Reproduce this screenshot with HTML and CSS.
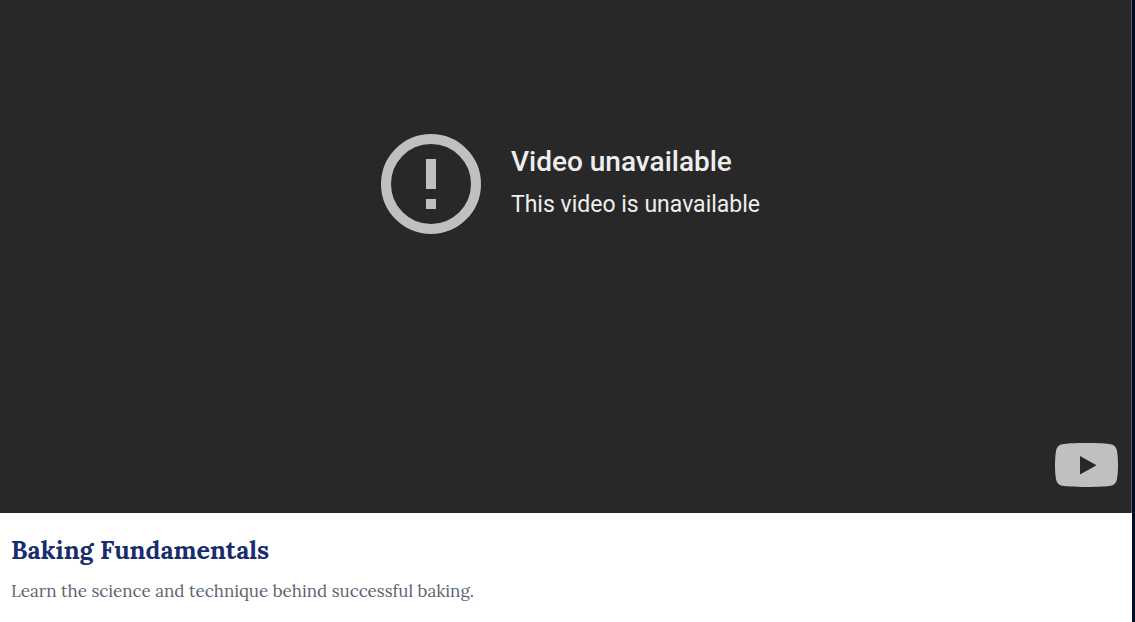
FILE: index.html
```html
<!DOCTYPE html>
<html lang="en">
<head>
<meta charset="utf-8">
<meta name="viewport" content="width=device-width, initial-scale=1">
<title>Baking Fundamentals</title>
<link rel="stylesheet" href="styles.css">
</head>
<body>
<main class="lesson">
  <section class="player" aria-label="Video player">
    <div class="notice">
      <svg class="notice-icon" viewBox="0 0 100 100" aria-hidden="true">
        <circle cx="50" cy="50" r="45" fill="none" stroke="currentColor" stroke-width="10"/>
        <path d="M45 25h10v30H45zM45 65h10v10H45z" fill="currentColor"/>
      </svg>
      <div class="notice-text">
        <h1 class="notice-title">Video unavailable</h1>
        <p class="notice-reason">This video is unavailable</p>
      </div>
    </div>
    <a class="brand" href="#" aria-label="Watch on YouTube">
      <svg class="brand-icon" viewBox="0 0 63 44" aria-hidden="true">
        <path fill="currentColor" fill-rule="evenodd" d="M31.500 0C44 0 52 .6 55.500 1.200C59.500 1.900 61.300 4.300 62 8C62.700 12 63 17 63 22S62.700 32 62 36C61.300 39.700 59.500 42.100 55.500 42.800C52 43.400 44 44 31.500 44S11 43.400 7.500 42.800C3.500 42.100 1.700 39.700 1 36C.3 32 0 27 0 22S.3 12 1 8C1.700 4.300 3.500 1.900 7.500 1.200C11 .6 19 0 31.500 0ZM25 13V31.500L41.500 22.300Z"/>
      </svg>
    </a>
  </section>
  <section class="details">
    <h2 class="details-title">Baking Fundamentals</h2>
    <p class="details-summary">Learn the science and technique behind successful baking.</p>
  </section>
</main>
</body>
</html>
```
FILE: styles.css
```css
* {
  box-sizing: border-box;
}

body {
  margin: 0;
  background: #020b24;
}

h1, h2, p {
  margin: 0;
}

.lesson {
  min-height: 100vh;
  margin-right: 3px;
  background: #fff;
}

.player {
  display: flex;
  flex-direction: column;
  justify-content: space-between;
  aspect-ratio: 1132 / 513;
  padding: 134px 13px 26px;
  border-right: 1px solid #5c5c5c;
  background: #282828;
  color: #c0c0c0;
}

.notice {
  display: flex;
  align-items: center;
  justify-content: center;
  gap: 30px;
  padding-left: 10px;
}

.notice-icon {
  flex: none;
  width: 100px;
  height: 100px;
}

.notice-text {
  padding-bottom: 4px;
  color: #eee;
  font-family: Roboto, "Liberation Sans", sans-serif;
}

.notice-title {
  font-size: 28px;
  font-weight: 500;
  line-height: 38px;
  padding-bottom: 8px;
}

.notice-reason {
  font-size: 23px;
  line-height: 32px;
}

.brand {
  display: block;
  align-self: flex-end;
  color: inherit;
}

.brand-icon {
  display: block;
  width: 63px;
  height: 44px;
}

.details {
  padding: 20px 11px;
  font-family: Lora, "Liberation Serif", serif;
}

.details-title {
  color: #182d6e;
  font-size: 25px;
  font-weight: 700;
  line-height: 34px;
  padding-bottom: 10px;
}

.details-summary {
  color: #5b6472;
  font-size: 17px;
  line-height: 28px;
}
```
